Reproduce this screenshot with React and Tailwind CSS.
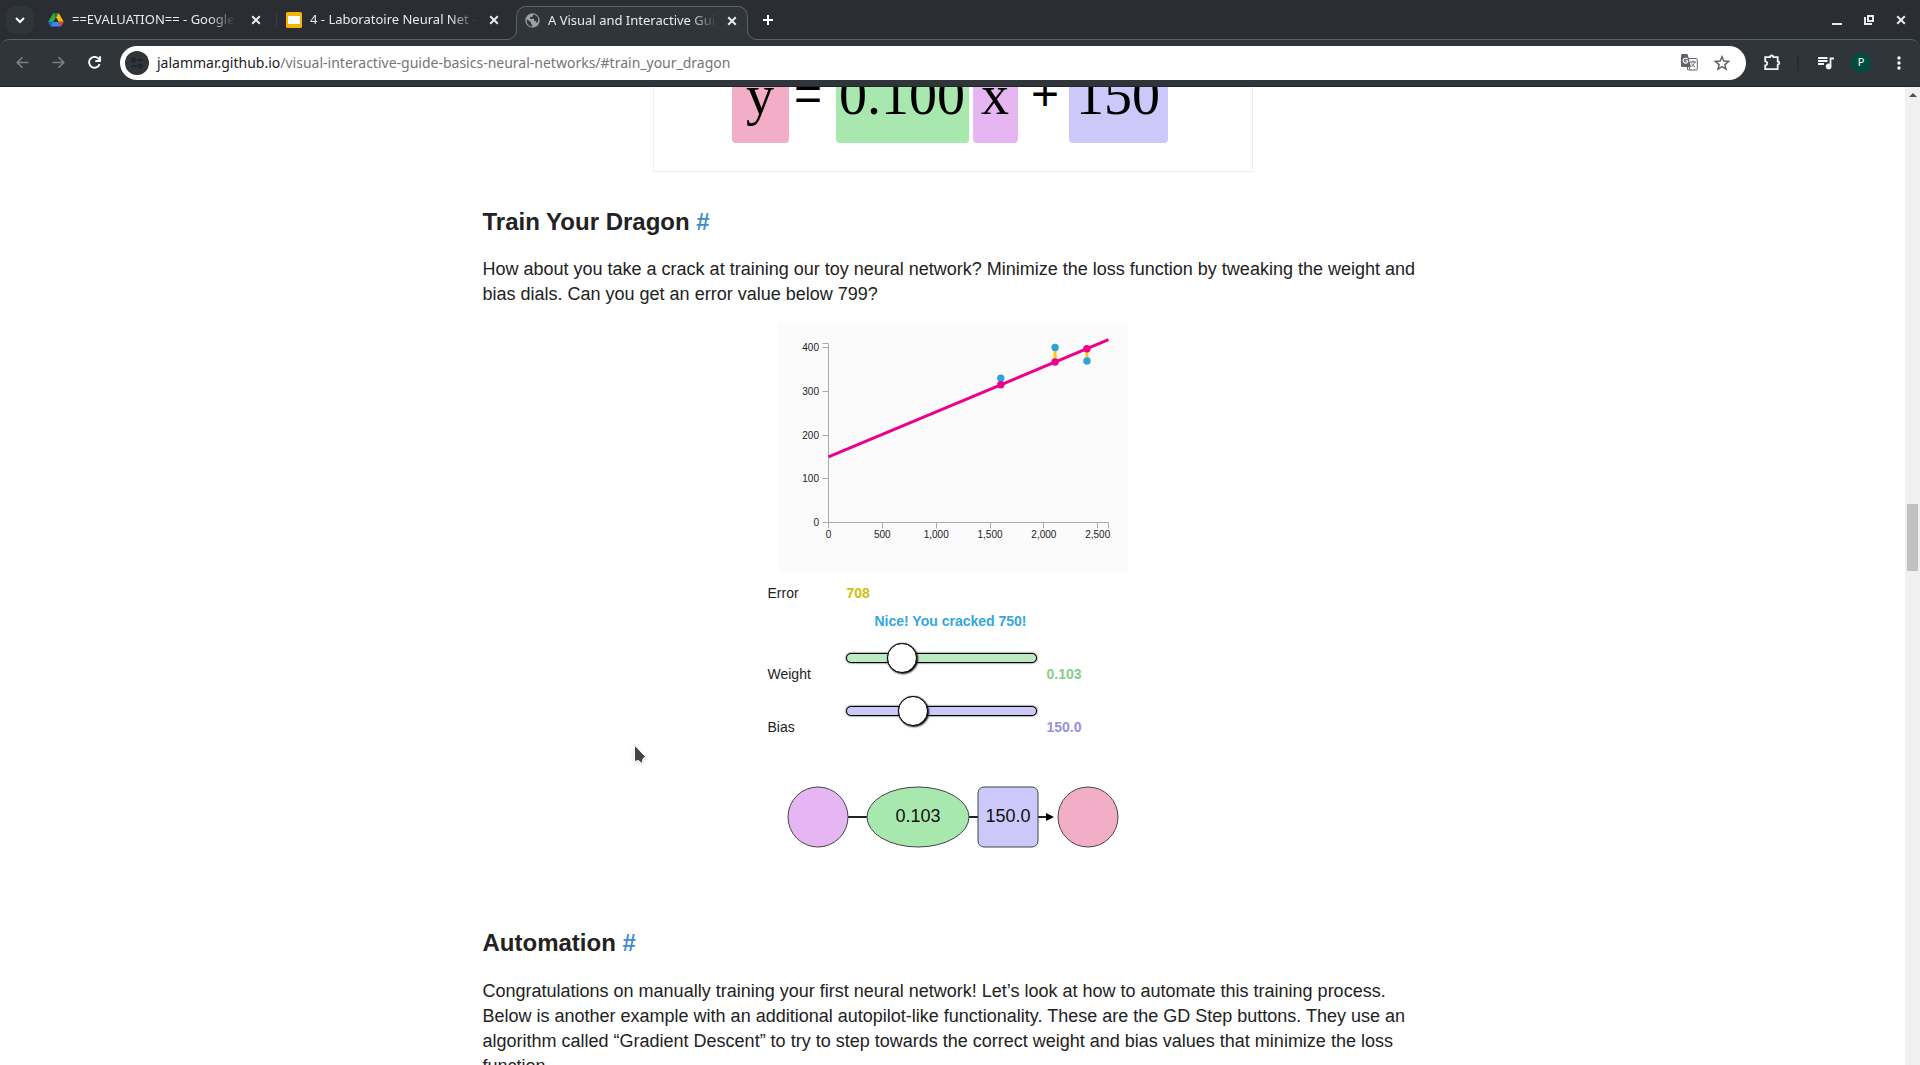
import { useState } from "react";

const tabText = "flex-1 overflow-hidden whitespace-nowrap text-[13px] text-[#e8eaed] [mask-image:linear-gradient(to_right,black_84%,transparent)]";

function CloseIcon() {
  return (
    <svg width="10" height="10" viewBox="0 0 10 10" stroke="#e8eaed" strokeWidth="2" fill="none">
      <path d="M1.2 1.2l7.6 7.6M8.8 1.2L1.2 8.8" />
    </svg>
  );
}

function DriveIcon() {
  return (
    <svg width="16" height="14" viewBox="0 0 16 14" className="shrink-0">
      <path d="M5.3 0h5.4L8 4.6z" fill="#188038" />
      <path d="M5.3 0L.3 8.8l2.6 4.6L8 4.6z" fill="#34a853" />
      <path d="M10.7 0l5 8.8h-5.2L8 4.6z" fill="#fbbc04" />
      <path d="M.3 8.8h5.2l-2.6 4.6z" fill="#1967d2" />
      <path d="M5.5 8.8h5l2.6 4.6H2.9z" fill="#4285f4" />
      <path d="M10.5 8.8h5.2l-2.6 4.6z" fill="#ea4335" />
      <path d="M8 4.6l2.500 4.200h-5z" fill="#2a2d32" />
    </svg>
  );
}

function SlidesIcon() {
  return (
    <svg width="16" height="16" viewBox="0 0 16 16" className="shrink-0">
      <rect width="16" height="16" rx="1.5" fill="#f4b400" />
      <rect x="2" y="4" width="12" height="8" fill="#fff" />
    </svg>
  );
}

function GlobeIcon() {
  return (
    <svg width="15" height="15" viewBox="0 0 15 15" className="shrink-0">
      <circle cx="7.5" cy="7.5" r="7.2" fill="#9aa0a6" />
      <path d="M2 6.2l4 3.3v1.2L7.2 12v1.6C4 13.4 1.700 11 1.700 7.500z" fill="#303539" />
      <path d="M8 1.400v1.800L6.500 4H5v1.700h4.200v2.200h1.500l1.300 2.300c2-2.500 1.600-6-1-7.700C10 1.800 9 1.400 8 1.400z" fill="#303539" />
    </svg>
  );
}

function BrowserTabs() {
  return (
    <header className="flex h-[39px] items-stretch bg-[#2a2d32]">
      <button aria-label="Search tabs" className="ml-[6px] mt-[6px] flex size-7 shrink-0 items-center justify-center rounded-[10px] bg-[#303539]">
        <svg width="10" height="7" viewBox="0 0 10 7" fill="none" stroke="#fff" strokeWidth="2"><path d="M1 1l4 4 4-4" /></svg>
      </button>
      <div className="ml-[14px] flex w-[228px] items-center gap-2">
        <DriveIcon />
        <span className={tabText}>==EVALUATION== - Google Drive</span>
        <button aria-label="Close tab" className="mr-[15px] ml-2"><CloseIcon /></button>
      </div>
      <div className="my-3 w-px bg-[#3a3e42]" />
      <div className="ml-[9px] flex w-[230px] items-center gap-2">
        <SlidesIcon />
        <span className={tabText}>4 - Laboratoire Neural Net - Google</span>
        <button aria-label="Close tab" className="mr-[17px] ml-1"><CloseIcon /></button>
      </div>
      <div className="relative z-10 mt-[6px] -mb-px flex w-[232px] items-center gap-2 rounded-t-[10px] border border-b-0 border-[#5d6165] bg-[#303539] pr-[10px] pl-2 pb-[6px]">
        <svg className="absolute -left-[10px] bottom-0" width="10" height="10" viewBox="0 0 10 10"><path d="M0 10A10 10 0 0 0 10 0V10z" fill="#303539" /><path d="M0 9.500A9.500 9.500 0 0 0 9.500 0" fill="none" stroke="#5d6165" /></svg>
        <svg className="absolute -right-[10px] bottom-0" width="10" height="10" viewBox="0 0 10 10"><path d="M10 10A10 10 0 0 1 0 0V10z" fill="#303539" /><path d="M10 9.500A9.500 9.500 0 0 1 .5 0" fill="none" stroke="#5d6165" /></svg>
        <GlobeIcon />
        <span className={tabText}>A Visual and Interactive Guide</span>
        <button aria-label="Close tab" className="ml-[2px]"><CloseIcon /></button>
      </div>
      <button aria-label="New tab" className="ml-[15px]">
        <svg width="10" height="10" viewBox="0 0 10 10" stroke="#fff" strokeWidth="2"><path d="M5 0v10M0 5h10" /></svg>
      </button>
      <div className="ml-auto flex items-center gap-[22px] pr-[14px]">
        <button aria-label="Minimize"><svg width="10" height="10" viewBox="0 0 10 10"><rect y="8" width="10" height="2" fill="#e8eaed" /></svg></button>
        <button aria-label="Restore"><svg width="10" height="10" viewBox="0 0 10 10" fill="none" stroke="#e8eaed" strokeWidth="2"><rect x="4" y="1" width="5" height="5" /><path d="M1 2v7h7" /></svg></button>
        <button aria-label="Close window"><CloseIcon /></button>
      </div>
    </header>
  );
}

function Toolbar() {
  return (
    <nav className="flex h-12 items-center rounded-t-[9px] border-t border-[#5d6165] bg-[#303539] pb-0.5 pl-4 pr-[13px] shadow-[inset_0_-1px_0_#22262a]">
      <button aria-label="Back"><svg width="13" height="13" viewBox="0 0 13 13" fill="none" stroke="#7d8185" strokeWidth="1.600"><path d="M12.500 6.500H1.500M6.500 1.200L1.200 6.500l5.300 5.300" /></svg></button>
      <button aria-label="Forward" className="ml-[23px]"><svg width="13" height="13" viewBox="0 0 13 13" fill="none" stroke="#7d8185" strokeWidth="1.600"><path d="M.5 6.500h11M6.500 1.200l5.300 5.300-5.300 5.300" /></svg></button>
      <button aria-label="Reload" className="ml-[23px]"><svg width="13" height="13" viewBox="0 0 13 13" fill="none" stroke="#fff" strokeWidth="1.900"><path d="M11.600 8.200A5.400 5.400 0 1 1 10.800 3L12 4.500" /><path d="M12 .3v4.700H7.300" /></svg></button>
      <div className="ml-[19px] flex h-[34px] flex-1 items-center rounded-full bg-white pr-[16px] pl-[5px]">
        <button aria-label="Site information" className="flex size-6 items-center justify-center rounded-full bg-[#303539]">
          <svg width="12" height="12" viewBox="0 0 12 12" fill="none" stroke="#1d2023" strokeWidth="1.400"><circle cx="2.500" cy="3" r="1.700" /><path d="M6 3h6M0 9h6" /><circle cx="9.500" cy="9" r="1.700" /></svg>
        </button>
        <label className="relative ml-2 flex-1">
          <span className="block text-[14px] leading-[20px] text-[#757575]"><span className="text-[#202124]">jalammar.github.io</span>/visual-interactive-guide-basics-neural-networks/#train_your_dragon</span>
          <input aria-label="Address" type="text" className="absolute inset-0 w-full bg-transparent outline-none" />
        </label>
        <button aria-label="Translate this page">
          <svg width="17" height="17" viewBox="0 0 17 17">
            <rect x="6.500" y="4.500" width="9.800" height="11.500" rx="1" fill="#fff" stroke="#5f6368" />
            <path d="M1.200 0h5.300l.9 3 2.600 10H1.200Q0 13 0 11.800V1.200Q0 0 1.200 0z" fill="#5f6368" />
            <path d="M6.500 5.200A2.400 2.400 0 1 0 6.600 8V6.800H4.500" fill="none" stroke="#fff" strokeWidth="1.200" />
            <path d="M9 8h6M12 6.500V8M13.800 8c-.5 2-2 3.600-3.400 4.500M10.500 9.500c.8 1.600 2.200 2.800 3.600 3.400M8 13l1 3" fill="none" stroke="#5f6368" />
          </svg>
        </button>
        <button aria-label="Bookmark this tab" className="ml-4">
          <svg width="16" height="16" viewBox="0 0 16 16" fill="none" stroke="#5f6368" strokeWidth="1.500"><path d="M8 1.800l1.800 4.300 4.700.4-3.600 3.100 1.100 4.600L8 11.700l-4 2.500 1.100-4.600L1.500 6.500l4.700-.4z" /></svg>
        </button>
      </div>
      <button aria-label="Extensions" className="ml-[18px]"><svg width="17" height="17" viewBox="0 0 17 17" fill="none" stroke="#f1f3f4" strokeWidth="1.800"><path d="M1.200 3.200H6a1.700 1.700 0 0 1 3.400 0h4.300V7.500a1.600 1.600 0 0 1 0 3.200v4.500H1.200V11.400a2 2 0 0 0 0-4z" /></svg></button>
      <div className="ml-[16px] h-4 w-[2px] bg-[#26292d]" />
      <button aria-label="Media controls" className="ml-[19px]"><svg width="16" height="14" viewBox="0 0 16 14" fill="none" stroke="#f1f3f4" strokeWidth="1.800"><path d="M0 2h9.500M0 5h9.500M0 8h6M12.500 10V2.500h3.500" /><circle cx="10.600" cy="10.400" r="2" fill="#f1f3f4" /></svg></button>
      <button aria-label="Profile" className="ml-[17px] flex size-5 items-center justify-center rounded-full bg-[#004d40] text-[11px] text-white">P</button>
      <button aria-label="Menu" className="ml-[20px] flex w-4 justify-center"><svg width="4" height="14" viewBox="0 0 4 14" fill="#fff"><circle cx="2" cy="2" r="1.700" /><circle cx="2" cy="7" r="1.700" /><circle cx="2" cy="12" r="1.700" /></svg></button>
    </nav>
  );
}

function Formula() {
  const token = "flex h-[88px] justify-center rounded-[4px] pt-[12px] font-['Liberation_Serif',serif] text-[56px] leading-[56px]";
  const operator = "flex justify-center font-['Liberation_Sans',sans-serif] text-[48px] leading-none pt-[15px]";
  return (
    <figure className="mx-auto -mt-[33px] flex w-[600px] max-w-full justify-center border border-[#eee] pr-1.5 pb-[28px] text-black">
      <span className={token + " w-[57px] bg-[#f3aec7]"}>y</span>
      <span className={operator + " mr-2 w-[39px]"}>=</span>
      <span className={token + " w-[133px] bg-[#a8e7ae]"}>0.100</span>
      <span className={token + " ml-1 w-[45px] bg-[#e6b6f2]"}>x</span>
      <span className={operator + " ml-1 w-[47px]"}>+</span>
      <span className={token + " w-[99px] bg-[#ccc8fa]"}>150</span>
    </figure>
  );
}

const houses = [
  { size: 1600, price: 330 },
  { size: 2104, price: 400 },
  { size: 2400, price: 369 },
];
const px = (v) => 50.5 + (v * 280) / 2600;
const py = (v) => 199.5 - v * 0.4375;

function Chart({ weight, bias }) {
  const predict = (x) => weight * x + bias;
  return (
    <svg width="350" height="249" viewBox="0 0 350 249" className="mx-auto bg-[#fbfbfb]" role="img" aria-label="House prices and the prediction line">
      <g fill="none" stroke="#aaa">
        <path d="M44.500 20.500h6v179h-6M50.500 205.500v-6h280v6" />
        {[100, 200, 300, 400].map((v) => <path key={v} d={`M44.500 ${Math.floor(py(v)) + 0.5}h6`} />)}
        {[500, 1000, 1500, 2000, 2500].map((v) => <path key={v} d={`M${Math.floor(px(v)) + 0.5} 199.500v6`} />)}
      </g>
      <g fontSize="10" fill="#222" fontFamily="Liberation Sans, sans-serif">
        {[0, 100, 200, 300, 400].map((v) => <text key={v} x="41" y={py(v) + 3.5} textAnchor="end">{v}</text>)}
        {[0, 500, 1000, 1500, 2000, 2500].map((v) => <text key={v} x={px(v)} y="215" textAnchor="middle">{v.toLocaleString("en-US")}</text>)}
      </g>
      {houses.map((h) => <line key={h.size} x1={px(h.size)} x2={px(h.size)} y1={py(h.price)} y2={py(predict(h.size))} stroke="#fc0" strokeWidth="3" />)}
      <line x1={px(0)} y1={py(predict(0))} x2={px(2600)} y2={py(predict(2600))} stroke="#ec008c" strokeWidth="3" />
      {houses.map((h) => (
        <g key={h.size}>
          <circle cx={px(h.size)} cy={py(h.price)} r="3.700" fill="#2da2dd" />
          <circle cx={px(h.size)} cy={py(predict(h.size))} r="3.700" fill="#ec008c" />
        </g>
      ))}
    </svg>
  );
}

const slider =
  "block h-[30px] w-[191px] appearance-none bg-transparent outline-none [&::-webkit-slider-runnable-track]:h-[10px] [&::-webkit-slider-runnable-track]:rounded-full [&::-webkit-slider-runnable-track]:border [&::-webkit-slider-runnable-track]:border-black [&::-webkit-slider-runnable-track]:shadow-[0_0_2px_#000] [&::-webkit-slider-thumb]:-mt-[11px] [&::-webkit-slider-thumb]:size-[30px] [&::-webkit-slider-thumb]:appearance-none [&::-webkit-slider-thumb]:rounded-full [&::-webkit-slider-thumb]:border [&::-webkit-slider-thumb]:border-black [&::-webkit-slider-thumb]:bg-white [&::-webkit-slider-thumb]:shadow-[1px_1px_2px_#000,0_0_1px_#0d0d0d]";

function Trainer() {
  const [weight, setWeight] = useState(0.103);
  const [bias, setBias] = useState(150);
  return (
    <div className="flex flex-col">
      <Chart weight={weight} bias={bias} />
      <div className="mx-auto mt-[10px] w-[370px] text-[14px] leading-[22px]">
        <div className="flex">
          <span className="w-[79px]">Error</span>
          <output className="font-bold text-[#d1bd0f]">708</output>
        </div>
        <p className="mt-[6px] pr-1 text-center font-bold text-[#33a6de]">Nice! You cracked 750!</p>
        <div className="mt-[11px] flex h-[42px]">
          <label htmlFor="weight" className="w-[78px] self-end">Weight</label>
          <input id="weight" type="range" min="0" max="0.4" step="0.001" value={weight} onChange={(e) => setWeight(+e.target.value)} className={slider + " [&::-webkit-slider-runnable-track]:bg-[#bdebc1]"} />
          <output htmlFor="weight" className="ml-[10px] self-end font-bold text-[#86cd8c]">{weight.toFixed(3)}</output>
        </div>
        <div className="mt-[11px] flex h-[42px]">
          <label htmlFor="bias" className="w-[78px] self-end">Bias</label>
          <input id="bias" type="range" min="0" max="460" step="0.5" value={bias} onChange={(e) => setBias(+e.target.value)} className={slider + " [&::-webkit-slider-runnable-track]:bg-[#ccc8fa]"} />
          <output htmlFor="bias" className="ml-[10px] self-end font-bold text-[#9691dc]">{bias.toFixed(1)}</output>
        </div>
      </div>
      <svg width="332" height="62" viewBox="0 0 332 62" className="mx-auto mt-[48px]" stroke="#444" fontFamily="Liberation Sans, sans-serif" fontSize="18" textAnchor="middle">
        <path d="M61 31h20M181 31h10M251 31h9" stroke="#222" strokeWidth="2" />
        <path d="M259 27l8 4-8 4z" fill="#000" stroke="none" />
        <circle cx="31" cy="31" r="30" fill="#e6b6f2" />
        <ellipse cx="131" cy="31" rx="51" ry="30" fill="#a8e7ae" />
        <rect x="191" y="1" width="60" height="60" rx="6" fill="#ccc8fa" />
        <circle cx="301" cy="31" r="30" fill="#f3aec7" />
        <text x="131" y="36" fill="#111" stroke="none">{weight.toFixed(3)}</text>
        <text x="221" y="36" fill="#111" stroke="none">{bias.toFixed(1)}</text>
      </svg>
    </div>
  );
}

export default function App() {
  return (
    <div className="relative flex h-screen flex-col overflow-hidden bg-[#2a2d32] font-['Noto_Sans',sans-serif]">
      <BrowserTabs />
      <Toolbar />
      <div className="flex min-h-0 flex-1 bg-white">
        <main className="min-w-0 flex-1 overflow-hidden font-['Liberation_Sans',sans-serif] text-[#222]">
          <article className="mx-auto w-full max-w-[940px]">
            <Formula />
            <h2 className="mt-[33px] text-[24px] leading-[34px] font-bold">Train Your Dragon <a href="#train_your_dragon" className="text-[#428bca]">#</a></h2>
            <p className="mt-[18px] mb-4 text-[18px] leading-[25px]">How about you take a crack at training our toy neural network? Minimize the loss function by tweaking the weight and bias dials. Can you get an error value below 799?</p>
            <Trainer />
            <h2 className="mt-[78px] text-[24px] leading-[34px] font-bold">Automation <a href="#automation" className="text-[#428bca]">#</a></h2>
            <p className="mt-[19px] text-[18px] leading-[25px]">Congratulations on manually training your first neural network! Let’s look at how to automate this training process. Below is another example with an additional autopilot-like functionality. These are the GD Step buttons. They use an algorithm called “Gradient Descent” to try to step towards the correct weight and bias values that minimize the loss function.</p>
          </article>
        </main>
        <div className="flex w-[15px] shrink-0 flex-col items-center bg-[#f0f0f0]">
          <svg width="8" height="4" viewBox="0 0 8 4" className="mt-[6px]"><path d="M0 4l4-4 4 4z" fill="#505050" /></svg>
          <div className="mt-[407px] h-[67px] w-[11px] bg-[#c1c1c1]" />
        </div>
      </div>
      <svg className="absolute top-[744px] left-[633px] drop-shadow" width="14" height="22" viewBox="0 0 14 22"><path d="M1.500 1v16.500l4-1 3.500 3.200 1-5 2.500-2z" fill="#444" stroke="#fff" /></svg>
    </div>
  );
}
